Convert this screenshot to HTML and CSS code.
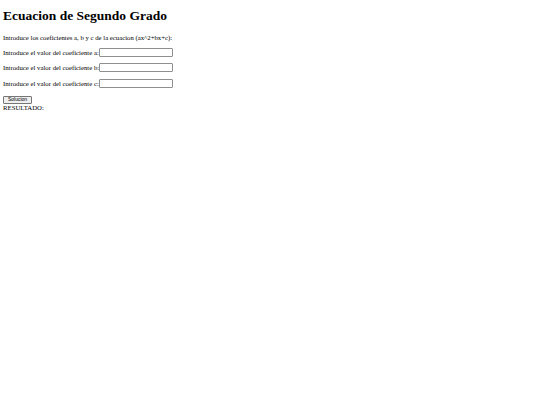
FILE: index.html
```html
<!DOCTYPE html>
<html lang="es">
<head>
<meta charset="utf-8">
<title>Ecuacion de Segundo Grado</title>
<link rel="stylesheet" href="styles.css">
</head>
<body>
<h1 class="title">Ecuacion de Segundo Grado</h1>
<p class="intro">Introduce los coeficientes a, b y c de la ecuacion (ax^2+bx+c):</p>
<p class="row">Introduce el valor del coeficiente a:<input class="field" type="text"></p>
<p class="row">Introduce el valor del coeficiente b:<input class="field" type="text"></p>
<p class="row">Introduce el valor del coeficiente c:<input class="field" type="text"></p>
<button class="btn" type="button">Solucion</button>
<div class="result">RESULTADO:</div>
</body>
</html>
```
FILE: styles.css
```css
html, body {
  background: #fff;
}
body {
  margin: 0;
  padding: 0 3px;
  font-family: "Liberation Serif", "Times New Roman", serif;
  font-size: 6.75px;
  color: #000;
}
.title {
  font-size: 13.5px;
  font-weight: bold;
  margin: 0;
  padding-top: 7px;
  line-height: 17px;
}
.intro {
  margin: 10px 0 0;
  line-height: 7px;
  height: 7px;
}
.row {
  margin: 6.5px 0 0;
  line-height: 9px;
  height: 9px;
  display: flex;
  align-items: center;
}
.field {
  width: 74px;
  height: 9px;
  box-sizing: border-box;
  margin: 0;
  padding: 0;
  border: 1px solid #8f8f8f;
  border-radius: 1px;
  font-size: 6px;
}
.btn {
  display: block;
  margin: 8.5px 0 0;
  padding: 0 3px;
  width: 29px;
  height: 7.5px;
  font-family: "Liberation Sans", Arial, sans-serif;
  font-size: 5px;
  line-height: 5px;
  border: 1px solid #767676;
  border-radius: 1px;
  background: #efefef;
  color: #000;
}
.result {
  line-height: 8px;
}
```
